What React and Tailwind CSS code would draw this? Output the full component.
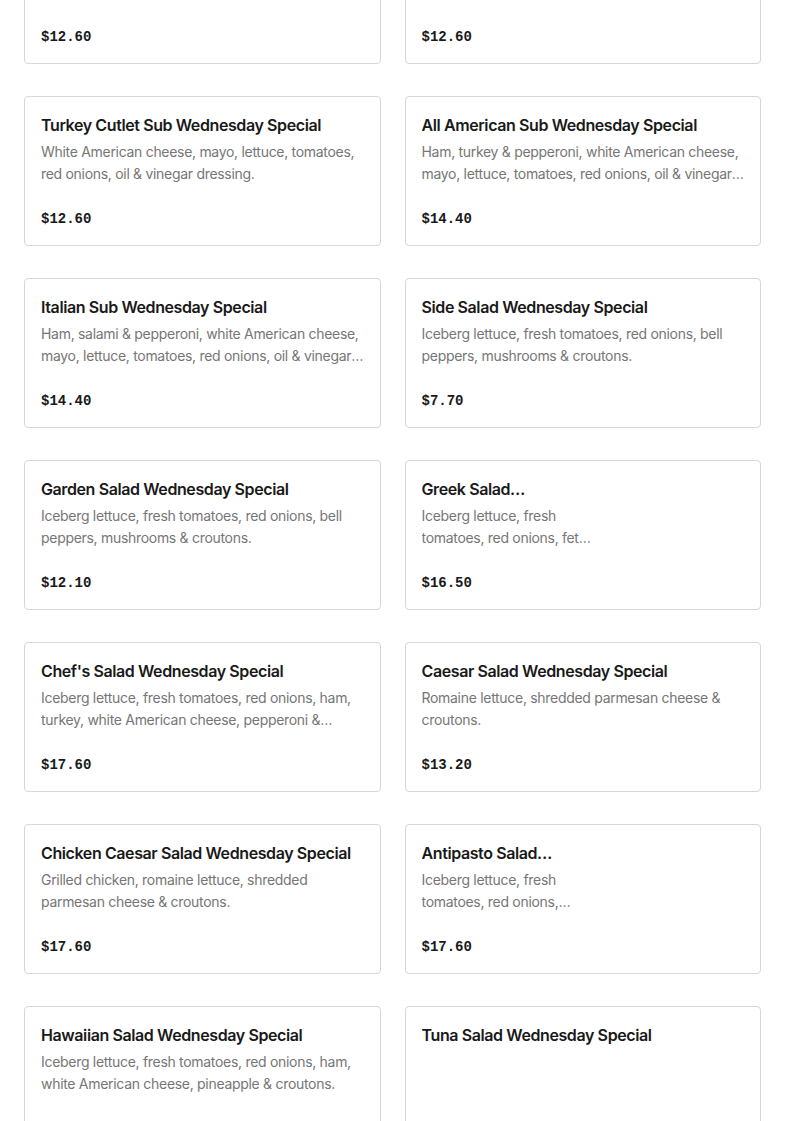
const items = [
  {
    name: 'Meatball Parm Sub Wednesday Special',
    desc: 'Homemade meatballs, marinara sauce & melted mozzarella cheese, baked golden.',
    price: '$12.60',
  },
  {
    name: 'Chicken Parm Sub Wednesday Special',
    desc: 'Breaded chicken cutlet, marinara sauce & melted mozzarella cheese, baked golden.',
    price: '$12.60',
  },
  {
    name: 'Turkey Cutlet Sub Wednesday Special',
    desc: 'White American cheese, mayo, lettuce, tomatoes, red onions, oil & vinegar dressing.',
    price: '$12.60',
  },
  {
    name: 'All American Sub Wednesday Special',
    desc: 'Ham, turkey & pepperoni, white American cheese, mayo, lettuce, tomatoes, red onions, oil & vinegar dressing.',
    price: '$14.40',
  },
  {
    name: 'Italian Sub Wednesday Special',
    desc: 'Ham, salami & pepperoni, white American cheese, mayo, lettuce, tomatoes, red onions, oil & vinegar dressing.',
    price: '$14.40',
  },
  {
    name: 'Side Salad Wednesday Special',
    desc: 'Iceberg lettuce, fresh tomatoes, red onions, bell peppers, mushrooms & croutons.',
    price: '$7.70',
  },
  {
    name: 'Garden Salad Wednesday Special',
    desc: 'Iceberg lettuce, fresh tomatoes, red onions, bell peppers, mushrooms & croutons.',
    price: '$12.10',
  },
  {
    name: 'Greek Salad Wednesday Special',
    desc: 'Iceberg lettuce, fresh tomatoes, red onions, fet…',
    price: '$16.50',
    photo: true,
  },
  {
    name: "Chef's Salad Wednesday Special",
    desc: 'Iceberg lettuce, fresh tomatoes, red onions, ham, turkey, white American cheese, pepperoni & croutons.',
    price: '$17.60',
  },
  {
    name: 'Caesar Salad Wednesday Special',
    desc: 'Romaine lettuce, shredded parmesan cheese & croutons.',
    price: '$13.20',
  },
  {
    name: 'Chicken Caesar Salad Wednesday Special',
    desc: 'Grilled chicken, romaine lettuce, shredded parmesan cheese & croutons.',
    price: '$17.60',
  },
  {
    name: 'Antipasto Salad Wednesday Special',
    desc: 'Iceberg lettuce, fresh tomatoes, red onions, provolone cheese, ham, salami & olives.',
    price: '$17.60',
    photo: true,
  },
  {
    name: 'Hawaiian Salad Wednesday Special',
    desc: 'Iceberg lettuce, fresh tomatoes, red onions, ham, white American cheese, pineapple & croutons.',
    price: '$16.50',
  },
  {
    name: 'Tuna Salad Wednesday Special',
    desc: '',
    price: '$15.40',
  },
]

function MenuCard({ item }) {
  return (
    <div className="flex h-[150px] rounded-[4px] border border-[#d6d6d6] bg-white">
      <div className={`flex min-w-0 flex-col p-4 ${item.photo ? 'w-[206px]' : 'flex-1'}`}>
        <h3 className="line-clamp-1 font-['Inter',sans-serif] text-[16px] leading-6 font-semibold tracking-[-0.4px] text-[#191919]">
          {item.name}
        </h3>
        <p className="mt-1 line-clamp-2 h-11 overflow-hidden font-['Inter',sans-serif] text-[14px] leading-[22px] tracking-[-0.3px] text-[#767676]">
          {item.desc}
        </p>
        <span className="mt-auto font-['Liberation_Mono',monospace] text-[14px] leading-5 font-bold text-[#191919]">
          {item.price}
        </span>
      </div>
    </div>
  )
}

export default function App() {
  return (
    <div className="h-[1121px] overflow-hidden bg-white">
      <div className="-mt-[86px] grid grid-cols-2 gap-x-6 gap-y-8 px-6">
        {items.map((item) => (
          <MenuCard key={item.name} item={item} />
        ))}
      </div>
    </div>
  )
}
